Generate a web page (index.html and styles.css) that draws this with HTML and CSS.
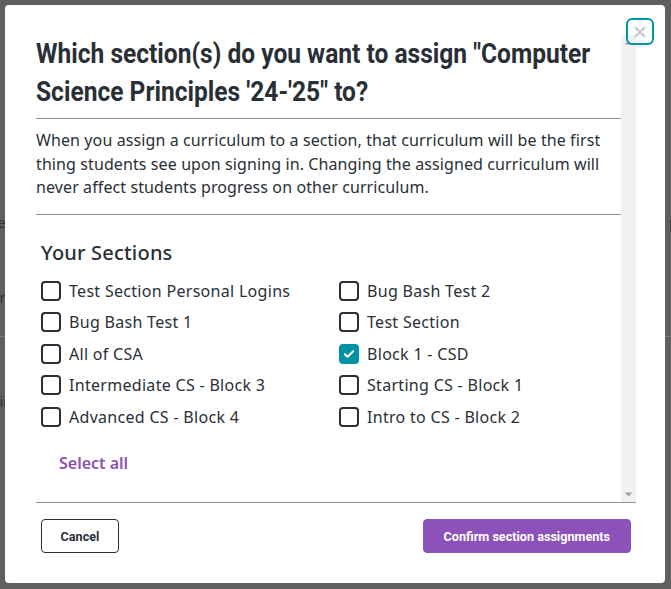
FILE: index.html
```html
<!DOCTYPE html>
<html lang="en">
<head>
<meta charset="utf-8">
<title>Assign curriculum</title>
<link rel="stylesheet" href="styles.css">
</head>
<body>
<div class="page">
  <div class="bg-row r1"><span>are</span><span>put</span></div>
  <div class="bg-row r2"><span>curr</span><span>ces</span></div>
  <div class="bg-row r3"><span>in</span><span></span></div>
  <div class="bg-rule"></div>
  <div class="bg-row r4"><span>chir</span><span>ele</span></div>
</div>
<div class="overlay">
  <div class="dialog">
    <button class="close" aria-label="Close">
      <svg width="12" height="12" viewBox="0 0 12 12"><path d="M1.5 1.5 L10.5 10.5 M10.5 1.5 L1.5 10.5" stroke="#c3c5c9" stroke-width="2" stroke-linecap="round"/></svg>
    </button>
    <div class="scroll">
      <div class="scroll-content">
        <h1 class="title">Which section(s) do you want to assign "Computer Science Principles '24-'25" to?</h1>
        <hr class="rule">
        <p class="desc">When you assign a curriculum to a section, that curriculum will be the first thing students see upon signing in. Changing the assigned curriculum will never affect students progress on other curriculum.</p>
        <hr class="rule">
        <div class="sections">
          <h2 class="sections-title">Your Sections</h2>
          <div class="grid">
            <label class="item"><span class="box"></span>Test Section Personal Logins</label>
            <label class="item"><span class="box"></span>Bug Bash Test 2</label>
            <label class="item"><span class="box"></span>Bug Bash Test 1</label>
            <label class="item"><span class="box"></span>Test Section</label>
            <label class="item"><span class="box"></span>All of CSA</label>
            <label class="item"><span class="box checked"><svg width="12" height="10" viewBox="0 0 12 10"><path d="M1.8 5.2 L4.6 7.8 L10.2 2.2" fill="none" stroke="#fff" stroke-width="2" stroke-linecap="round" stroke-linejoin="round"/></svg></span>Block 1 - CSD</label>
            <label class="item"><span class="box"></span>Intermediate CS - Block 3</label>
            <label class="item"><span class="box"></span>Starting CS - Block 1</label>
            <label class="item"><span class="box"></span>Advanced CS - Block 4</label>
            <label class="item"><span class="box"></span>Intro to CS - Block 2</label>
          </div>
          <a class="select-all">Select all</a>
        </div>
      </div>
      <div class="scrollbar" aria-hidden="true">
        <svg class="arrow" width="15" height="15" viewBox="0 0 15 15"><path d="M3.5 9.5 L7.5 5.5 L11.5 9.5 Z" fill="#a3a3a3"/></svg>
        <svg class="arrow" width="15" height="15" viewBox="0 0 15 15"><path d="M3.5 5.5 L7.5 9.5 L11.5 5.5 Z" fill="#a3a3a3"/></svg>
      </div>
    </div>
    <div class="footer">
      <button class="btn cancel"><span class="btn-label">Cancel</span></button>
      <button class="btn confirm"><span class="btn-label">Confirm section assignments</span></button>
    </div>
  </div>
</div>
</body>
</html>
```
FILE: styles.css
```css
html, body {
  margin: 0;
  padding: 0;
}
body {
  width: 671px;
  height: 589px;
  overflow: hidden;
  background: #5f5f5f;
  font-family: "Noto Sans", sans-serif;
  position: relative;
}
.page {
  padding-top: 212px;
  color: #2c3440;
  font-family: "Noto Sans", sans-serif;
  font-size: 15px;
}
.bg-row {
  display: flex;
  justify-content: space-between;
  height: 20px;
  margin-left: -17px;
  margin-right: -22px;
}
.r2 { margin-top: 55px; }
.r3 { margin-top: 9px; }
.r4 { margin-top: 54px; }
.bg-rule {
  height: 1px;
  background: #7a7a7a;
}
.overlay {
  position: absolute;
  inset: 0;
  padding: 5px 6px 6px 5px;
  box-sizing: border-box;
}
.dialog {
  position: relative;
  background: #fff;
  border-radius: 4px;
  height: 578px;
  box-sizing: border-box;
  padding: 30px 29px 30px 31px;
  display: flex;
  flex-direction: column;
}
.close {
  position: absolute;
  top: 13px;
  right: 11px;
  width: 28px;
  height: 27px;
  border: 2px solid #0093a4;
  border-radius: 6px;
  background: transparent;
  padding: 0;
  display: flex;
  align-items: center;
  justify-content: center;
  z-index: 2;
}
.scroll {
  height: 468px;
  display: flex;
  border-bottom: 1px solid #8f9198;
  box-sizing: border-box;
}
.scroll-content {
  flex: 1;
  min-width: 0;
  overflow: hidden;
}
.scrollbar {
  width: 15px;
  flex: none;
  background: #f1f1f1;
  display: flex;
  flex-direction: column;
  justify-content: space-between;
}
.arrow {
  display: block;
}
.title {
  margin: 0;
  width: 667px;
  transform: scaleX(0.877);
  transform-origin: left top;
  font-family: Roboto, sans-serif;
  font-weight: 700;
  font-size: 28px;
  line-height: 38px;
  color: #292f36;
}
.rule {
  border: 0;
  border-top: 1px solid #8f9198;
  margin: 0;
}
.rule:first-of-type {
  margin-top: 7px;
}
.desc {
  margin: 10px 0 14px;
  font-size: 16px;
  letter-spacing: 0.1px;
  line-height: 23.5px;
  color: #292f36;
}
.sections {
  padding: 26px 5px 0;
}
.sections-title {
  margin: 0 0 14px;
  font-size: 20px;
  font-weight: 500;
  letter-spacing: 0.2px;
  line-height: 24px;
  color: #292f36;
}
.grid {
  display: grid;
  grid-template-columns: 298px 1fr;
  row-gap: 7.5px;
}
.item {
  display: flex;
  align-items: center;
  gap: 8px;
  font-size: 16px;
  letter-spacing: 0.3px;
  line-height: 24px;
  color: #292f36;
}
.box {
  width: 20px;
  height: 20px;
  box-sizing: border-box;
  border: 2px solid #292f36;
  border-radius: 4px;
  display: flex;
  align-items: center;
  justify-content: center;
  flex: none;
}
.box.checked {
  background: #0093a4;
  border-color: #0093a4;
}
.select-all {
  display: block;
  margin: 22px 0 0 18px;
  font-size: 16px;
  font-weight: 600;
  color: #8c52ba;
  line-height: 24px;
}
.footer {
  display: flex;
  justify-content: space-between;
  padding: 16px 5px 0;
}
.btn {
  height: 34px;
  border-radius: 4px;
  font-family: Roboto, sans-serif;
  font-weight: 700;
  font-size: 13px;
  cursor: pointer;
  padding: 0;
  display: flex;
  align-items: center;
  justify-content: center;
}
.btn-label {
  display: inline-block;
  transform: scaleX(0.97);
  white-space: nowrap;
}
.cancel {
  width: 78px;
  background: #fff;
  border: 1px solid #292f36;
  color: #292f36;
}
.confirm {
  width: 208px;
  background: #8c52ba;
  border: 1px solid #8c52ba;
  color: #fff;
}
```
